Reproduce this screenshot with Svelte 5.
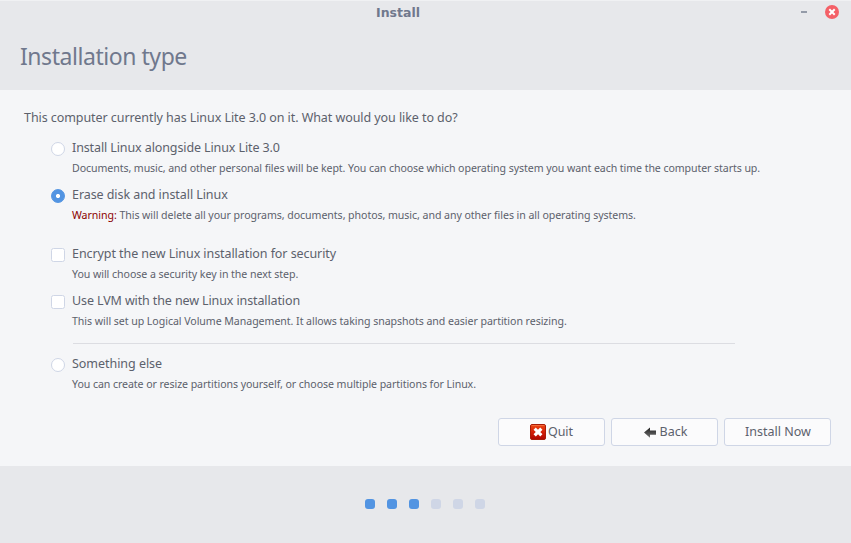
<script>
  let method = $state('erase');
  let checked = $state({ encrypt: false, lvm: false });

  const sections = [
    [
      { id: 'alongside', kind: 'radio', label: 'Install Linux alongside Linux Lite 3.0', ls: -0.11, note: 'Documents, music, and other personal files will be kept. You can choose which operating system you want each time the computer starts up.', ns: -0.08 },
      { id: 'erase', kind: 'radio', label: 'Erase disk and install Linux', ls: -0.07, warning: 'Warning:', note: 'This will delete all your programs, documents, photos, music, and any other files in all operating systems.', ns: -0.058 }
    ],
    [
      { id: 'encrypt', kind: 'checkbox', label: 'Encrypt the new Linux installation for security', ls: -0.07, note: 'You will choose a security key in the next step.', ns: -0.05 },
      { id: 'lvm', kind: 'checkbox', label: 'Use LVM with the new Linux installation', ls: -0.115, note: 'This will set up Logical Volume Management. It allows taking snapshots and easier partition resizing.', ns: -0.05 }
    ],
    [
      { id: 'else', kind: 'radio', label: 'Something else', ls: -0.04, note: 'You can create or resize partitions yourself, or choose multiple partitions for Linux.', ns: -0.07 }
    ]
  ];
  const isOn = (o) => (o.kind === 'radio' ? method === o.id : checked[o.id]);
  function pick(o) {
    if (o.kind === 'radio') method = o.id;
    else checked[o.id] = !checked[o.id];
  }
</script>

<div class="window">
  <header>
    <div class="titlebar">
      <span class="title">Install</span>
      <div class="controls">
        <svg width="6" height="14" viewBox="0 0 6 14"><path d="M0 6h6v2H0z" fill="#949ba8" /></svg>
        <svg width="14" height="14" viewBox="0 0 14 14"><circle cx="7" cy="7" r="7" fill="#f46067" /><path d="M5 5l4 4M9 5L5 9" stroke="#fff" stroke-width="2" stroke-linecap="square" /></svg>
      </div>
    </div>
    <h1>Installation type</h1>
  </header>

  <main>
    <p class="question">This computer currently has Linux Lite 3.0 on it. What would you like to do?</p>
    {#each sections as section, i}
      <section class="s{i}">
        {#each section as o}
          <button class="option" role={o.kind} aria-checked={isOn(o)} onclick={() => pick(o)}>
            <span class="mark {o.kind}" class:on={isOn(o)}></span>
            <span class="copy">
              <span class="label" style="letter-spacing: {o.ls}px">{o.label}</span>
              <span class="note" style="letter-spacing: {o.ns}px">{#if o.warning}<em>{o.warning}</em>{' '}{/if}{o.note}</span>
            </span>
          </button>
        {/each}
      </section>
    {/each}

    <div class="actions">
      <button class="action">
        <svg width="16" height="16" viewBox="0 0 16 16">
          <defs>
            <linearGradient id="red" x1="0" y1="0" x2="0" y2="1"><stop offset="0" stop-color="#f04a13" /><stop offset=".5" stop-color="#d42008" /><stop offset="1" stop-color="#ad0500" /></linearGradient>
          </defs>
          <rect x=".5" y=".5" width="15" height="15" rx="1.5" fill="url(#red)" stroke="#a81c08" />
          <path d="M1.5 1.5h13" stroke="#f98253" stroke-opacity=".6" />
          <path d="M5.8 5.8l4.4 4.4M10.2 5.8l-4.4 4.4" stroke="#fff" stroke-width="3.2" stroke-linecap="square" />
        </svg>
        <span class="quit">Quit</span>
      </button>
      <button class="action">
        <svg class="arrow" width="12" height="11" viewBox="0 0 12 11">
          <defs><linearGradient id="grey" x1="0" y1="0" x2="0" y2="1"><stop offset="0" stop-color="#202020" /><stop offset="1" stop-color="#727272" /></linearGradient></defs>
          <path d="M0 5.5L6 .5v3h6v4.2H6v3z" fill="url(#grey)" />
        </svg>
        <span class="back">Back</span>
      </button>
      <button class="action"><span class="now">Install Now</span></button>
    </div>
  </main>

  <footer>
    {#each [1, 2, 3, 4, 5, 6] as step}
      <i class:done={step <= 3}></i>
    {/each}
  </footer>
</div>

<style>
  :global(body) { margin: 0; overflow: hidden; }
  .window {
    width: 851px;
    height: 543px;
    display: flex;
    flex-direction: column;
    background: #f5f6f8;
    color: #5c616c;
    font-family: "Noto Sans", "Droid Sans", sans-serif;
    font-size: 12.5px;
    line-height: 20px;
    white-space: nowrap;
  }
  header {
    box-sizing: border-box;
    height: 90px;
    background: #e7e8eb;
    border-top: 1px solid #f0f1f3;
    color: #70788d;
  }
  .titlebar {
    height: 24px;
    display: grid;
    grid-template-columns: 376px 1fr auto;
    align-items: center;
  }
  .title {
    grid-column: 2;
    font: bold 12.5px/24px "DejaVu Sans", sans-serif;
  }
  .controls { display: flex; gap: 18px; padding-right: 12px; margin-top: -2px; }
  svg { display: block; flex: none; }
  h1 {
    margin: 14px 0 0 20px;
    font-size: 23px;
    line-height: 34px;
    font-weight: 400;
    letter-spacing: -0.45px;
  }
  main { height: 376px; display: flex; flex-direction: column; }
  .question { margin: 18px 0 9px 24px; letter-spacing: -0.07px; }
  section { margin-left: 51px; display: flex; flex-direction: column; gap: 6px; }
  .s1 { margin-top: 18px; }
  .s1::after {
    content: "";
    width: 662px;
    height: 1px;
    margin: 6px 0 0 22px;
    background: #dcdde2;
  }
  .s2 { margin-top: 9px; }
  button {
    font: inherit;
    color: inherit;
    text-align: left;
    letter-spacing: inherit;
  }
  .option {
    display: flex;
    gap: 7px;
    padding: 0;
    border: 0;
    background: none;
    height: 41px;
  }
  .copy { display: flex; flex-direction: column; padding-top: 1px; }
  .label { height: 20px; }
  .note { height: 20px; font-size: 10.6px; }
  em { font-style: normal; color: #8b0000; }
  .mark {
    box-sizing: border-box;
    width: 14px;
    height: 14px;
    margin-top: 5px;
    background: #fff;
    border: 1px solid #cfd6e6;
    border-radius: 2.5px;
  }
  .mark.radio { border-radius: 50%; }
  .mark.on { border-color: #5294e2; background: #5294e2; }
  .mark.radio.on { background: radial-gradient(circle, #fff 1.7px, #5294e2 2.4px); }
  .actions {
    display: flex;
    justify-content: flex-end;
    gap: 6px;
    margin: auto 20px 20px 0;
  }
  .action {
    box-sizing: border-box;
    width: 107px;
    height: 28px;
    display: flex;
    align-items: center;
    justify-content: center;
    padding: 0 0 1px;
    background: #fbfbfc;
    border: 1px solid #cfd6e6;
    border-radius: 3px;
  }
  .action svg { margin-top: 1px; }
  .action .arrow { margin-left: 2px; }
  .quit { margin-left: 2px; }
  .back { margin-left: 4px; }
  .now { margin-left: 1px; }
  footer {
    height: 77px;
    display: flex;
    align-items: center;
    justify-content: center;
    gap: 12px;
    padding: 0 1px 1px 0;
    box-sizing: border-box;
    background: #e7e8eb;
  }
  i { width: 10px; height: 10px; border-radius: 3px; background: #cfd6e6; }
  i.done { background: #5294e2; }
</style>
